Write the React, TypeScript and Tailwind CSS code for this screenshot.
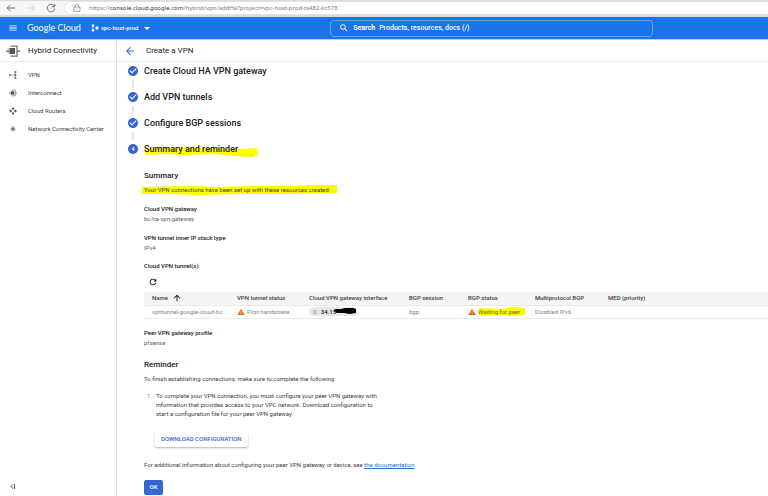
import type { ReactNode } from "react";
import {
  MdArrowBack,
  MdArrowUpward,
  MdCheckCircle,
  MdMenu,
  MdRefresh,
  MdSearch,
  MdWarning,
} from "react-icons/md";

function InterconnectIcon({ className }: { className: string }) {
  return (
    <svg viewBox="0 0 28 24" className={className} fill="none">
      <path d="M9 2h13v20H9" stroke="#757575" strokeWidth="2.5" />
      <rect x="7" y="6" width="11" height="12" fill="#555" />
      <path d="M3 8h4M3 16h4" stroke="#9e9e9e" strokeWidth="2" />
      <path d="M0 12h7M22 12h6" stroke="#616161" strokeWidth="2.5" />
    </svg>
  );
}

function VpnIcon() {
  return (
    <svg viewBox="0 0 24 24" className="size-2" fill="none" stroke="#757575" strokeWidth="2">
      <path d="M3 12h15M19 4v16" />
      <path d="M0 10h5v4H0zM16 1h6v4h-6zM16 10h6v4h-6zM16 19h6v4h-6z" fill="#616161" stroke="none" />
    </svg>
  );
}

function RouterIcon() {
  return (
    <svg viewBox="0 0 24 24" className="size-2" fill="#616161">
      <path d="M12 0l5 6h-3v3h-4V6H7zM12 24l-5-6h3v-3h4v3h3zM0 12l6-5v3h3v4H6v3zM24 12l-6 5v-3h-3v-4h3V7z" />
    </svg>
  );
}

function CenterIcon() {
  return (
    <svg viewBox="0 0 24 24" className="size-2" fill="none" stroke="#9e9e9e" strokeWidth="2">
      <path d="M12 2v20M2 12h20M5 5l14 14M19 5L5 19" />
      <circle cx="12" cy="12" r="4" fill="#757575" stroke="#757575" />
    </svg>
  );
}

function ProjectIcon() {
  return (
    <svg viewBox="0 0 24 24" className="size-2" fill="#fff">
      <circle cx="6" cy="5" r="4" />
      <circle cx="6" cy="19" r="4" />
      <circle cx="18" cy="12" r="5" />
      <path d="M5 5h2v14H5z" />
    </svg>
  );
}

type MarkerProps = {
  children: ReactNode;
  path: string;
  box: string;
  className: string;
};

function Marker({ children, path, box, className }: MarkerProps) {
  return (
    <span className="relative inline-block">
      <svg
        viewBox={box}
        preserveAspectRatio="none"
        className={`absolute max-w-none ${className}`}
        fill="#fdfb00"
        aria-hidden="true"
      >
        <path d={path} />
      </svg>
      <span className="relative">{children}</span>
    </span>
  );
}

const navItems = [
  { label: "VPN", icon: <VpnIcon /> },
  { label: "Interconnect", icon: <InterconnectIcon className="size-2" /> },
  { label: "Cloud Routers", icon: <RouterIcon /> },
  { label: "Network Connectivity Center", icon: <CenterIcon /> },
];

const doneSteps = ["Create Cloud HA VPN gateway", "Add VPN tunnels", "Configure BGP sessions"];

function BrowserBar() {
  return (
    <div className="flex h-[17px] items-center border-t border-b-2 border-[#dcdcdc] bg-[#f7f7f7] pl-1.5">
      <button aria-label="Back" className="mr-2.5">
        <svg viewBox="0 0 24 24" className="size-2.5" fill="none" stroke="#555" strokeWidth="2">
          <path d="M22 12H3M11 4l-8 8 8 8" />
        </svg>
      </button>
      <button aria-label="Forward" className="mr-2.5">
        <svg viewBox="0 0 24 24" className="size-2.5" fill="none" stroke="#d0d0d0" strokeWidth="2">
          <path d="M2 12h19M13 4l8 8-8 8" />
        </svg>
      </button>
      <button aria-label="Reload" className="mr-2">
        <svg viewBox="0 0 24 24" className="size-2.5" fill="none" stroke="#555" strokeWidth="2">
          <path d="M20 8a9 9 0 1 0 1 5M21 2v7h-7" />
        </svg>
      </button>
      <div className="flex h-[14px] flex-1 items-center rounded-l-full border border-r-0 border-[#e2e2e2] bg-white pl-2">
        <svg viewBox="0 0 24 24" className="mr-2 size-2" fill="none" stroke="#777" strokeWidth="2">
          <path d="M3 9h18v13H3zM7 9V6a5 5 0 0 1 10 0v3" />
          <path d="M11 15h2" />
        </svg>
        <p className="font-['Noto_Sans',sans-serif] text-[6px] leading-[10px] text-[#808080]">
          https://<span className="text-[#333]">console.cloud.google.com</span>
          /hybrid/vpn/addHa?project=vpc-host-prod-ts482-kz578
        </p>
      </div>
    </div>
  );
}

function CloudHeader() {
  return (
    <header className="flex h-[22px] items-center bg-[#1a73e8] text-white">
      <div className="flex w-[43%] items-center pl-2">
        <button aria-label="Main menu">
          <MdMenu className="size-2.5" />
        </button>
        <a href="#home" className="ml-[9px] font-['Lato',sans-serif] text-[9px] leading-3">
          Google Cloud
        </a>
        <button className="ml-2.5 flex items-center text-[6px] leading-[10px] font-medium">
          <ProjectIcon />
          <span className="ml-0.5">vpc-host-prod</span>
          <svg viewBox="0 0 10 5" className="ml-1.5 h-[3px] w-1.5" fill="#fff">
            <path d="M0 0h10L5 5z" />
          </svg>
        </button>
      </div>
      <label className="flex h-[17px] w-[42%] items-center rounded-sm border border-[#6ba5f0] pl-2 text-[7px] font-bold">
        <MdSearch className="mr-1 size-2.5" />
        Search
        <input
          type="text"
          placeholder="Products, resources, docs (/)"
          className="ml-1 flex-1 bg-transparent text-[7px] font-medium outline-none placeholder:text-white"
        />
      </label>
    </header>
  );
}

function Sidebar() {
  return (
    <aside className="flex w-[117px] shrink-0 flex-col border-r border-[#e4e4e4]">
      <div className="flex h-[22px] items-center border-b border-[#ececec] pl-1.5">
        <InterconnectIcon className="h-3 w-3.5" />
        <h1 className="ml-2 text-[8px] leading-[10px] text-[#202124]">Hybrid Connectivity</h1>
      </div>
      <nav className="flex flex-col gap-2 pt-2">
        {navItems.map((item) => (
          <a
            key={item.label}
            href="#nav"
            className="flex h-[10px] items-center pl-[9px] text-[6px] leading-[10px] text-[#3c4043]"
          >
            {item.icon}
            <span className="ml-[11px]">{item.label}</span>
          </a>
        ))}
      </nav>
      <button aria-label="Collapse menu" className="mt-auto mb-[7px] ml-2.5 self-start">
        <svg viewBox="0 0 12 12" className="block size-[5px]" fill="none" stroke="#333" strokeWidth="2">
          <path d="M7 1L2 6l5 5M11 0v12" />
        </svg>
      </button>
    </aside>
  );
}

function Steps() {
  return (
    <ol className="text-[9px] leading-3 font-medium text-[#202124]">
      {doneSteps.map((step) => (
        <li key={step}>
          <div className="flex items-center">
            <MdCheckCircle className="mr-[5px] size-3 text-[#3367d6]" />
            <h2>{step}</h2>
          </div>
          <div className="my-[3px] ml-[5px] h-2 w-0.5 bg-[#e4e4e4]" />
        </li>
      ))}
      <li className="flex items-center">
        <span className="mr-1.5 ml-px flex size-2.5 items-center justify-center rounded-full bg-[#3367d6] text-[6px] leading-[10px] text-white">
          4
        </span>
        <h2>
          <Marker
            box="0 0 114 10"
            className="top-1 left-0 h-2.5 w-[114px]"
            path="M0 1L20 0 60 1 96 2 113 1 114 8 108 10 90 9 70 7 40 8 20 7 2 8z"
          >
            Summary and reminder
          </Marker>
        </h2>
      </li>
    </ol>
  );
}

function Field({ label, value }: { label: string; value: string }) {
  return (
    <div className="text-[6px] leading-[10px]">
      <dt className="font-medium text-[#202124]">{label}</dt>
      <dd className="text-[#5f6368]">{value}</dd>
    </div>
  );
}

function TunnelTable() {
  return (
    <table className="w-full table-fixed text-left text-[6px] leading-[10px]">
      <colgroup>
        <col className="w-[85px]" />
        <col className="w-[72px]" />
        <col className="w-[100px]" />
        <col className="w-[59px]" />
        <col className="w-[67px]" />
        <col className="w-[73px]" />
        <col />
      </colgroup>
      <thead>
        <tr className="h-[13px] border-b border-[#e8e8e8] bg-[#f5f5f5] text-[#3c4043] *:pl-2 *:font-medium">
          <th>
            <span className="flex items-center gap-1">
              Name <MdArrowUpward className="size-2.5 text-black" />
            </span>
          </th>
          <th>VPN tunnel status</th>
          <th>Cloud VPN gateway interface</th>
          <th>BGP session</th>
          <th>BGP status</th>
          <th>Multiprotocol BGP</th>
          <th>MED (priority)</th>
        </tr>
      </thead>
      <tbody>
        <tr className="h-[13px] border-b border-[#ececec] whitespace-nowrap text-[#80868b] *:pl-2">
          <td>vpntunnel-google-cloud-bc</td>
          <td>
            <span className="flex items-center gap-0.5">
              <MdWarning className="size-2 text-[#e8710a]" />
              First handshake
            </span>
          </td>
          <td>
            <span className="relative flex h-[9px] w-[49px] items-center rounded-full bg-[#e8e8e8] pl-1">
              0 :&nbsp;<span className="font-medium text-[#202124]">34.15</span>
              <svg
                viewBox="0 0 24 8"
                preserveAspectRatio="none"
                className="absolute top-0 right-0.5 h-2 w-[22px]"
                fill="#000"
                aria-hidden="true"
              >
                <path d="M1 2L8 2 12 1 21 1 24 2 24 6 17 7 11 6 3 6 0 4z" />
              </svg>
            </span>
          </td>
          <td>bgp</td>
          <td>
            <span className="flex items-center gap-0.5">
              <MdWarning className="size-2 text-[#d9640a]" />
              <Marker
                box="0 0 48 9"
                className="top-0 left-0 h-[9px] w-12"
                path="M1 1L25 2 33 0 47 1 47 8 34 9 20 8 4 9 0 7z"
              >
                <span className="text-[#6b6b20]">Waiting for peer</span>
              </Marker>
            </span>
          </td>
          <td>Disabled IPv6</td>
          <td />
        </tr>
      </tbody>
    </table>
  );
}

export default function App() {
  return (
    <div className="flex min-h-screen flex-col bg-white font-['Roboto',sans-serif]">
      <BrowserBar />
      <CloudHeader />
      <div className="flex flex-1 border-t border-[#c8ccd2]">
        <Sidebar />
        <main className="min-w-0 flex-1">
          <div className="flex h-[22px] items-center border-b border-[#ececec] pl-[7px]">
            <a href="#back" aria-label="Back">
              <MdArrowBack className="size-3 text-[#3367d6]" />
            </a>
            <h1 className="ml-2.5 text-[8px] leading-[10px] text-[#202124]">Create a VPN</h1>
          </div>

          <div className="pt-[3px] pl-2.5">
            <Steps />

            <section className="pl-[17px]">
              <h3 className="mt-[15px] text-[8px] leading-3 font-medium text-[#202124]">Summary</h3>
              <p className="mt-[3px] text-[6px] leading-[10px] text-[#3c4043]">
                <Marker
                  box="0 0 195 10"
                  className="top-0 -left-0.5 h-2.5 w-[195px]"
                  path="M0 2L50 1 80 2 110 1 150 1 165 0 195 0 195 8 150 9 100 9 60 10 20 9 0 9z"
                >
                  Your VPN connections have been set up with these resources created:
                </Marker>
              </p>
              <dl className="mt-[9px] flex flex-col gap-[9px]">
                <Field label="Cloud VPN gateway" value="bc-ha-vpn-gateway" />
                <Field label="VPN tunnel inner IP stack type" value="IPv4" />
              </dl>
              <h4 className="mt-2 text-[6px] leading-[10px] font-medium text-[#202124]">
                Cloud VPN tunnel(s)
              </h4>
              <button aria-label="Refresh" className="mt-1.5 mb-[5px] ml-1 block">
                <MdRefresh className="size-2.5 text-black" />
              </button>
              <TunnelTable />
              <dl className="mt-[9px]">
                <Field label="Peer VPN gateway profile" value="pfsense" />
              </dl>
            </section>

            <section className="pl-[17px] text-[6px] leading-[10px] text-[#3c4043]">
              <h3 className="mt-[11px] text-[8px] leading-3 font-medium text-[#202124]">Reminder</h3>
              <p className="mt-[3px]">
                To finish establishing connections, make sure to complete the following
              </p>
              <ol className="mt-[7px]">
                <li className="flex gap-1 pl-[3px]">
                  <span className="text-[#80868b]">1.</span>
                  <p className="w-[230px] leading-[9px]">
                    To complete your VPN connection, you must configure your peer VPN gateway with
                    information that provides access to your VPC network. Download configuration to
                    start a configuration file for your peer VPN gateway.
                  </p>
                </li>
              </ol>
              <button className="mt-3.5 ml-[11px] block h-[15px] rounded-xs px-1.5 text-[6px] font-medium text-[#3367d6] shadow-[0_1px_2px_rgba(0,0,0,0.3)]">
                DOWNLOAD CONFIGURATION
              </button>
              <p className="mt-[13px]">
                For additional information about configuring your peer VPN gateway or device, see{" "}
                <a href="#documentation" className="text-[#3367d6] underline">
                  the documentation
                </a>
              </p>
              <button className="mt-2.5 block h-[15px] w-[19px] rounded-xs bg-[#3367d6] text-[6px] font-medium text-white">
                OK
              </button>
            </section>
          </div>
        </main>
      </div>
    </div>
  );
}
